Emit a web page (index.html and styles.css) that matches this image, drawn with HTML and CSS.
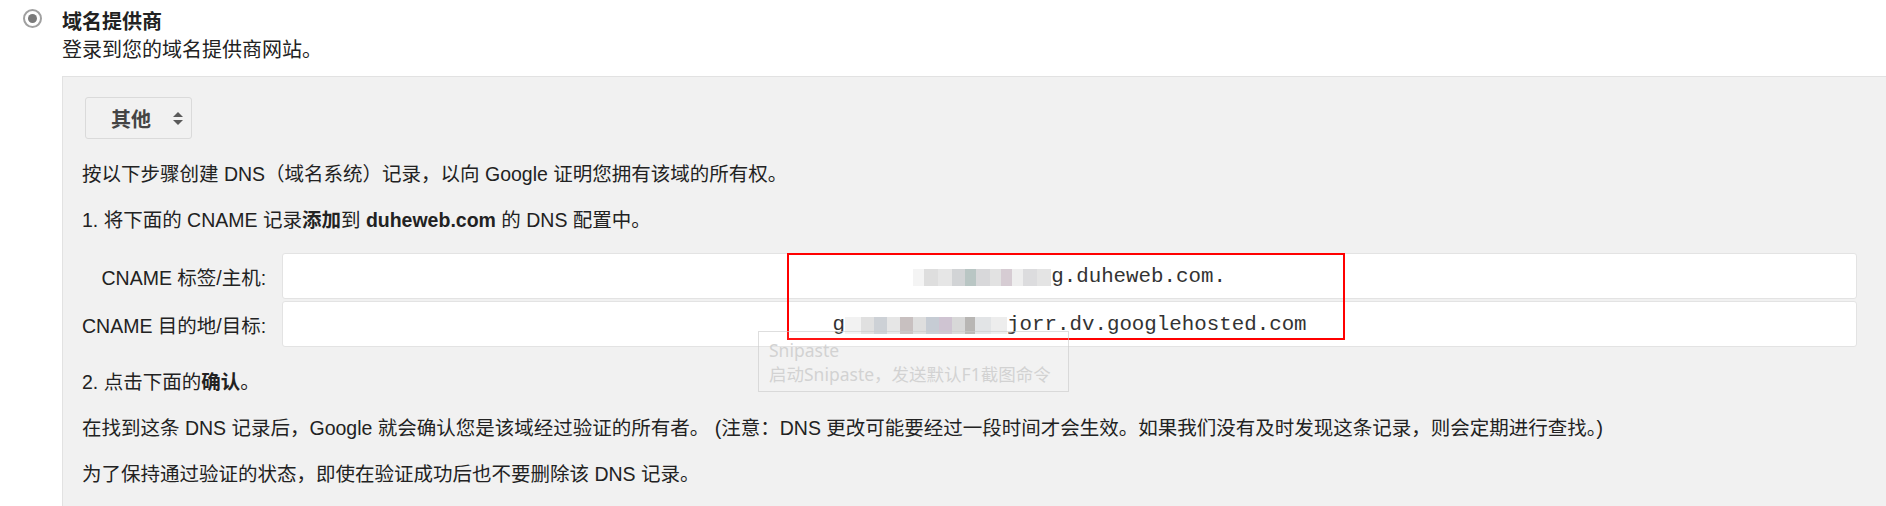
FILE: index.html
```html
<!DOCTYPE html>
<html lang="zh-CN">
<head>
  <meta charset="UTF-8">
  <title>域名提供商验证</title>
  <link rel="stylesheet" href="styles.css">
</head>
<body>

  <div class="option">
    <span class="radio"><span class="radio-dot"></span></span>

    <div class="option-body">
      <div class="option-title">域名提供商</div>
      <div class="option-desc">登录到您的域名提供商网站。</div>

      <div class="panel">
        <div class="select-wrap">
          <div class="select">
            <span>其他</span>
            <svg width="12" height="15" viewBox="0 0 12 15">
              <path d="M6 1 L11 6 L1 6 Z" fill="#5a5a5a"/>
              <path d="M6 14 L11 9 L1 9 Z" fill="#5a5a5a"/>
            </svg>
          </div>
        </div>

        <p>按以下步骤创建 DNS（域名系统）记录，以向 Google 证明您拥有该域的所有权。</p>
        <p>1. 将下面的 CNAME 记录<strong>添加</strong>到 <strong>duheweb.com</strong> 的 DNS 配置中。</p>

        <div class="records">
          <label>CNAME 标签/主机:</label>
          <div class="field"><span class="mosaic mosaic-a"></span>g.duheweb.com.</div>

          <label>CNAME 目的地/目标:</label>
          <div class="field">g<span class="mosaic mosaic-b"></span>jorr.dv.googlehosted.com</div>
        </div>

        <p>2. 点击下面的<strong>确认</strong>。</p>
        <p>在找到这条 DNS 记录后，Google 就会确认您是该域经过验证的所有者。 (注意：DNS 更改可能要经过一段时间才会生效。如果我们没有及时发现这条记录，则会定期进行查找。)</p>
        <p>为了保持通过验证的状态，即使在验证成功后也不要删除该 DNS 记录。</p>

        <!-- screenshot annotation + tooltip lying over the records -->
        <div class="mark"></div>
        <div class="tip">
          <div>Snipaste</div>
          <div>启动Snipaste，发送默认F1截图命令</div>
        </div>
      </div>
    </div>
  </div>

</body>
</html>
```

FILE: styles.css
```css
body {
  margin: 0;
  font-family: "Liberation Sans", Arial, "Noto Sans CJK SC", sans-serif;
  font-size: 20px;
  color: #222;
  background: #fff;
}

.option {
  display: flex;
  gap: 20px;
  padding: 8px 0 0 23px;
}

.radio {
  flex: none;
  width: 19px;
  height: 19px;
  margin-top: 1px;
  box-sizing: border-box;
  border: 2px solid #a0a0a0;
  border-radius: 50%;
  background: #fff;
  display: flex;
  align-items: center;
  justify-content: center;
}

.radio-dot {
  width: 9px;
  height: 9px;
  border-radius: 50%;
  background: #7a7a7a;
}

.option-body {
  flex: 1;
  min-width: 0;
}

.option-title {
  font-weight: bold;
  line-height: 28px;
}

.option-desc {
  line-height: 28px;
}

.panel {
  position: relative;
  margin-top: 12px;
  padding: 20px 29px 20px 19px;
  background: #f1f1f1;
  border-top: 1px solid #e2e2e2;
  border-left: 1px solid #e2e2e2;
  font-size: 19.5px;
}

.select-wrap {
  margin-bottom: 22px;
}

.select {
  display: inline-flex;
  align-items: center;
  justify-content: space-between;
  box-sizing: border-box;
  width: 107px;
  height: 42px;
  margin-left: 3px;
  padding: 0 7px 0 25px;
  border: 1px solid #dadada;
  border-radius: 3px;
  font-size: 20px;
  font-weight: bold;
  color: #444;
}

.panel p {
  margin: 0 0 20px;
  line-height: 26px;
}

.records {
  display: grid;
  grid-template-columns: auto 1fr;
  column-gap: 16px;
  row-gap: 2px;
  margin-bottom: 22px;
}

.records label {
  align-self: center;
  text-align: right;
}

.field {
  height: 46px;
  box-sizing: border-box;
  display: flex;
  align-items: center;
  justify-content: center;
  background: #fff;
  border: 1px solid #e3e3e3;
  border-radius: 3px;
  font-family: "Liberation Mono", "Courier New", monospace;
  font-size: 20.8px;
  color: #333;
  white-space: pre;
}

.mosaic {
  display: inline-block;
  height: 17px;
  margin-top: 2px;
}

.mosaic-a {
  width: 138px;
  background: linear-gradient(90deg,
    #f4f4f4 0 8%, #dedede 8% 18%, #e6e6e6 18% 28%, #d2d4d6 28% 38%,
    #b9c6c4 38% 46%, #d8d8da 46% 56%, #e2e2e2 56% 64%, #d6ccd3 64% 72%,
    #eeeeee 72% 80%, #dcdcde 80% 90%, #e4e4e4 90% 100%);
}

.mosaic-b {
  width: 162px;
  background: linear-gradient(90deg,
    #f2f2f2 0 10%, #e0e0e0 10% 18%, #cdd1d6 18% 26%, #e6e6e6 26% 34%,
    #c8c0c0 34% 42%, #dedede 42% 50%, #c6ccd4 50% 58%, #cfc4d2 58% 66%,
    #d8d8d8 66% 74%, #b8b6b4 74% 80%, #e2e4e6 80% 90%, #ededed 90% 100%);
}

.mark {
  position: absolute;
  left: 724px;
  top: 176px;
  width: 558px;
  height: 87px;
  box-sizing: border-box;
  border: 2px solid #ff0000;
}

.tip {
  position: absolute;
  left: 695px;
  top: 254px;
  width: 311px;
  height: 61px;
  box-sizing: border-box;
  padding: 6px 10px;
  border: 1px solid rgba(200, 200, 200, 0.6);
  background: rgba(255, 255, 255, 0.08);
  font-family: "Noto Sans", "Noto Sans CJK SC", sans-serif;
  font-size: 17.5px;
  line-height: 24px;
  color: #d2d2d2;
  white-space: nowrap;
}
```
